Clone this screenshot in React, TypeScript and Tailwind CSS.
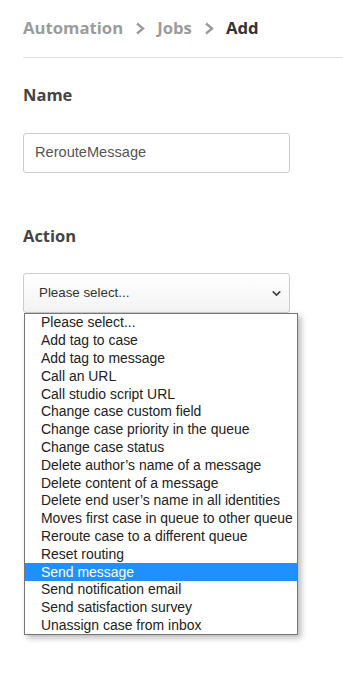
import { ChevronDown } from 'lucide-react';

const actions = [
  'Please select...',
  'Add tag to case',
  'Add tag to message',
  'Call an URL',
  'Call studio script URL',
  'Change case custom field',
  'Change case priority in the queue',
  'Change case status',
  "Delete author\u2019s name of a message",
  'Delete content of a message',
  "Delete end user\u2019s name in all identities",
  'Moves first case in queue to other queue',
  'Reroute case to a different queue',
  'Reset routing',
  'Send message',
  'Send notification email',
  'Send satisfaction survey',
  'Unassign case from inbox',
];

function Crumb() {
  return (
    <svg width="12" height="13" viewBox="0 0 12 13" className="shrink-0">
      <path d="M3 1.5 L9 6.5 L3 11.5" fill="none" stroke="#9b9b9b" strokeWidth="2.4" />
    </svg>
  );
}

export default function App() {
  return (
    <div className="min-h-[675px] bg-white pl-[23px] font-['Open_Sans',sans-serif]">
      <div className="flex items-center gap-[11px] pt-4 text-[16.7px] font-bold leading-6">
        <span className="text-[#9b9b9b]">Automation</span>
        <Crumb />
        <span className="text-[#9b9b9b]">Jobs</span>
        <Crumb />
        <span className="text-[#333]">Add</span>
      </div>
      <div className="mt-[17px] border-t border-[#e3e3e3]" />

      <div className="mt-[25px] text-[16.5px] font-bold leading-6 text-[#444]">Name</div>
      <div className="mt-[26px] flex h-10 w-[267px] items-center rounded-[3px] border border-[#ccc] px-[11px] font-['Liberation_Sans',Arial,sans-serif] text-[14.6px] text-[#555]">
        RerouteMessage
      </div>

      <div className="mt-[51px] text-[16.5px] font-bold leading-6 text-[#444]">Action</div>
      <div className="relative mt-[25px] w-[267px]">
        <div className="flex h-10 items-center justify-between rounded-[3px] border border-[#ccc] bg-gradient-to-b from-white to-[#f3f3f3] pl-[15px] pr-[6px] font-['Liberation_Sans',Arial,sans-serif] text-[13.33px] text-[#333]">
          <span>Please select...</span>
          <ChevronDown size={13} strokeWidth={3.2} className="text-[#444]" />
        </div>
        <ul className="absolute left-[1px] top-[40px] z-10 w-[274px] border border-[#767676] bg-white font-['Liberation_Sans',Arial,sans-serif] text-[13.95px] text-[#222] shadow-[3px_3px_6px_rgba(0,0,0,0.28)]">
          {actions.map((a) => (
            <li
              key={a}
              className={
                a === 'Send message'
                  ? 'flex h-[17.8px] items-center whitespace-nowrap bg-[#1e90ff] pl-[16px] text-white'
                  : 'flex h-[17.8px] items-center whitespace-nowrap pl-[16px]'
              }
            >
              {a}
            </li>
          ))}
        </ul>
      </div>
    </div>
  );
}
